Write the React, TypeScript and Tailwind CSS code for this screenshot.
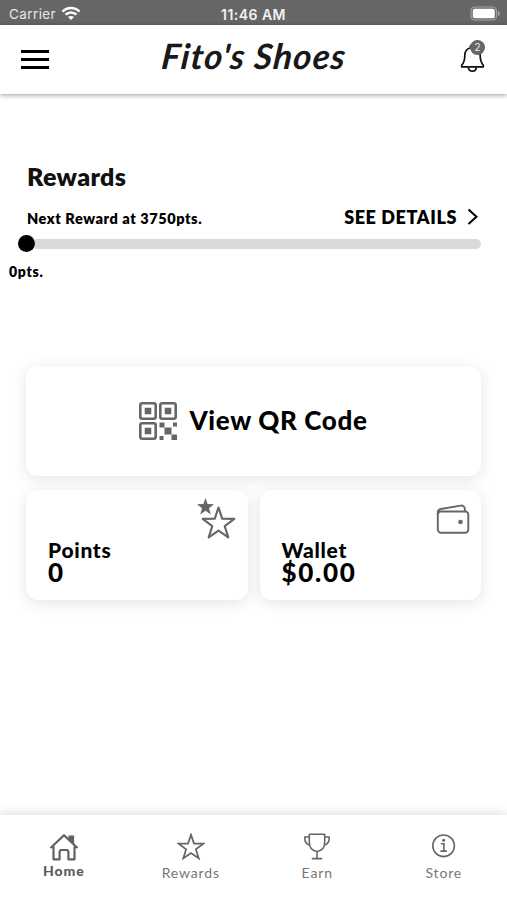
import type { ReactNode } from "react";

const STAR = "M14 1.8 17 10.6 26.4 10.7 18.9 16.4 21.7 25.3 14 20 6.3 25.3 9.1 16.4 1.6 10.7 11 10.6Z";

function StatusBar() {
  return (
    <div className="grid h-[25px] grid-cols-3 items-center bg-[#666] font-['Inter',sans-serif] text-[13.5px] leading-[25px] text-white">
      <div className="flex items-center gap-[5px] pt-[2px] pl-[9px] text-[#e6e6e6]">
        <span className="tracking-[0.4px]">Carrier</span>
        <svg className="-mt-[2px]" width="20" height="15" viewBox="0 0 20 15" fill="none" stroke="white" strokeWidth="2.6">
          <path d="M1.5 5.6C6.3.8 13.7.8 18.5 5.6M4.6 8.7c3-3 7.8-3 10.8 0" />
          <path d="M7 11.1c1.7-1.6 4.3-1.6 6 0l-3 3Z" fill="white" stroke="none" />
        </svg>
      </div>
      <div className="pt-[2px] text-center text-[14px] font-semibold tracking-[0.45px] whitespace-nowrap text-[#f2f2f2]">11:46 AM</div>
      <div className="flex justify-end pr-[6px]">
        <svg width="31" height="15" viewBox="0 0 31 15">
          <rect x="1" y="1" width="25.5" height="13" rx="4" fill="none" stroke="#a3a3a3" strokeWidth="1.2" />
          <rect x="2.8" y="2.8" width="22" height="9.5" rx="2" fill="white" />
          <path d="M28 5v5c2.4-1 2.4-4 0-5Z" fill="#aaa" />
        </svg>
      </div>
    </div>
  );
}

function Header() {
  return (
    <header className="flex h-[69px] items-start justify-between bg-white pr-[19px] pl-[21px] shadow-[0_1px_5px_rgba(0,0,0,0.4)]">
      <div className="mt-[25px] flex w-[28px] flex-col gap-[5px]">
        <div className="h-[3px] bg-black" />
        <div className="h-[3px] bg-black" />
        <div className="h-[3px] bg-black" />
      </div>
      <h1 className="mt-[10px] -skew-x-6 font-['Lato',sans-serif] text-[35px] leading-[40px] font-bold tracking-[1.1px] whitespace-nowrap text-[#191919] italic">
        Fito's Shoes
      </h1>
      <div className="relative mt-[15px] h-[34px] w-[28px]">
        <svg className="absolute top-[4px] left-0" width="26" height="29" viewBox="0 0 26 29" fill="none" stroke="#111" strokeWidth="1.7" strokeLinejoin="round">
          <path d="M10.3 3.8V3a2 2 0 0 1 4 0v.8c4.2 1 5.9 4 5.9 8 0 5 1.3 7.5 3.1 9.5v1.6H1.7v-1.6c1.8-2 3.1-4.5 3.1-9.5 0-4 1.5-7 5.5-8Z" />
          <path d="M8.4 23.3c.2 5.2 7.8 5.2 8 0" />
        </svg>
        <div className="absolute top-0 left-[10px] h-[15px] w-[15px] rounded-full bg-[#666] text-center font-['Inter',sans-serif] text-[10px] leading-[15px] text-[#eee]">2</div>
      </div>
    </header>
  );
}

function RewardsProgress() {
  return (
    <section className="pt-[67px] font-extrabold">
      <h2 className="pl-[27px] text-[25px] leading-[30px] tracking-[0.35px] text-[#111]">Rewards</h2>
      <div className="mt-[13px] flex h-[26px] items-center justify-between pr-[27px] pl-[27px]">
        <span className="pt-[3px] text-[14.5px] tracking-[0.56px]">Next Reward at 3750pts.</span>
        <span className="flex items-center gap-[10px]">
          <span className="text-[18px] tracking-[0.6px]">SEE DETAILS</span>
          <svg className="-mt-[1px]" width="13" height="18" viewBox="0 0 13 18" fill="none" stroke="black" strokeWidth="2">
            <path d="m1.5 1.5 8 7.3-8 7.3" />
          </svg>
        </span>
      </div>
      <div className="mt-[5px] flex h-[17px] items-center pr-[26px] pl-[18px]">
        <div className="h-[17px] w-[17px] rounded-full bg-black" />
        <div className="h-[10px] flex-1 rounded-r-full bg-[#d9d9d9]" />
      </div>
      <div className="mt-[10px] pl-[9px] text-[14px] leading-[20px] tracking-[0.7px]">0pts.</div>
    </section>
  );
}

function QrIcon() {
  return (
    <svg width="38" height="38" viewBox="0 0 38 38" fill="#666">
      <g fill="none" stroke="#666" strokeWidth="2.6">
        <rect x="1.3" y="1.3" width="15.4" height="15.4" rx="2" />
        <rect x="21.3" y="1.3" width="15.4" height="15.4" rx="2" />
        <rect x="1.3" y="21.3" width="15.4" height="15.4" rx="2" />
      </g>
      <path d="M5.7 5.7h6.6v6.6H5.7zM25.7 5.7h6.6v6.6h-6.6zM5.7 25.7h6.6v6.6H5.7zM20.5 20.5h5v5h-5zM25.5 25.5h7v7h-7zM34 20.5h4v4h-4zM20.5 34h4v4h-4zM32.5 32.5H38V38h-5.5z" />
    </svg>
  );
}

function StatCard({ title, value, icon, valueClass }: { title: string; value: string; icon: ReactNode; valueClass: string }) {
  return (
    <div className="flex h-[110px] flex-1 justify-between rounded-[12px] bg-white pr-[11px] pl-[21px] shadow-[0_3px_16px_rgba(0,0,0,0.11)]">
      <div className="pt-[49px] font-black">
        <div className="pl-[1px] text-[21px] leading-[22px] tracking-[0.7px]">{title}</div>
        <div className={valueClass}>{value}</div>
      </div>
      <div className="pt-[8px]">{icon}</div>
    </div>
  );
}

function Cards() {
  return (
    <section className="mt-[84px] flex flex-col gap-[14px] px-[26px]">
      <div className="flex h-[110px] items-center justify-center gap-[12px] rounded-[12px] bg-white shadow-[0_3px_16px_rgba(0,0,0,0.11)]">
        <QrIcon />
        <span className="-mt-[1px] text-[26px] font-black tracking-[0.65px]">View QR Code</span>
      </div>
      <div className="flex gap-[12px]">
        <StatCard
          title="Points"
          value="0"
          valueClass="pl-[1px] text-[26px] leading-[22px]"
          icon={
            <svg width="40" height="42" viewBox="0 0 40 42" fill="none">
              <path d="m8.5 0 2.1 6 6.4.2-5 4 1.8 6.2-5.3-3.6-5.3 3.6L5 10.2 0 6.2 6.4 6Z" fill="#666" />
              <path d="m21.5 9.5 3.8 11.3 12 .1-9.6 7.2 3.6 11.3-9.8-6.8-9.8 6.8 3.6-11.3-9.6-7.2 12-.1Z" stroke="#666" strokeWidth="2.1" strokeLinejoin="round" />
            </svg>
          }
        />
        <StatCard
          title="Wallet"
          value="$0.00"
          valueClass="pl-[1px] text-[26px] leading-[22px] tracking-[1.7px]"
          icon={
            <svg className="mt-[6px]" width="34" height="31" viewBox="0 0 34 31" fill="none" stroke="#666" strokeWidth="1.9" strokeLinejoin="round">
              <rect x="1.8" y="7.5" width="30.5" height="21.3" rx="3.2" />
              <path d="M1.8 11V8.5c0-2 1-3 3-3.5l20-3.4c2.5-.3 3.8 1.2 4 3.2l.2 2.7" />
              <circle cx="24.5" cy="18" r="2.3" fill="#666" stroke="none" />
            </svg>
          }
        />
      </div>
    </section>
  );
}

function NavItem({ label, children }: { label: string; children: ReactNode }) {
  return (
    <div className="flex w-[126.5px] flex-col items-center pt-[18px]">
      <div className="h-[28px]">{children}</div>
      <div className="mt-[2px] text-[14px] leading-[20px] tracking-[0.85px] text-[#777]">{label}</div>
    </div>
  );
}

function BottomNav() {
  return (
    <nav className="mt-auto flex h-[85px] bg-white shadow-[0_-2px_9px_rgba(0,0,0,0.13)]">
      <div className="flex w-[127.5px] flex-col items-center pt-[18px] text-[#5c5c5c]">
        <svg width="30" height="29" viewBox="0 0 30 29" fill="none" stroke="#606060" strokeWidth="2.2" strokeLinejoin="round">
          <path d="M4.5 13.5v12.8h6.1v-7.5c0-1 .8-1.8 1.8-1.8h5.2c1 0 1.8.8 1.8 1.8v7.5h6.1V13.5M1.5 15 15 2.2 28.5 15" />
          <path d="M19.5 2.5h5.6v8.5L19.5 6Z" fill="#606060" stroke="none" />
        </svg>
        <div className="-mt-[1px] text-[14px] leading-[20px] font-black tracking-[0.9px]">Home</div>
      </div>
      <NavItem label="Rewards">
        <svg width="28" height="28" viewBox="0 0 28 28" fill="none" stroke="#666" strokeWidth="1.8">
          <path d={STAR} />
        </svg>
      </NavItem>
      <NavItem label="Earn">
        <svg width="28" height="28" viewBox="0 0 28 28" fill="none" stroke="#666" strokeWidth="1.6" strokeLinejoin="round">
          <path d="M6.3 1.2h15.4v8c0 5-2.7 8.5-7.7 9.3-5-.8-7.7-4.3-7.7-9.3ZM14 18.5v7.1M8.8 25.6h10.4M6.3 4H1.8c-.2 5 1.4 7.5 5.2 8.3M21.7 4h4.5c.2 5-1.4 7.5-5.2 8.3" />
        </svg>
      </NavItem>
      <NavItem label="Store">
        <svg width="26" height="28" viewBox="0 0 26 28" fill="none" stroke="#666" strokeWidth="1.6">
          <circle cx="12.6" cy="12.8" r="10.8" />
          <path d="M9.9 10.8h3V18M9.4 18.1H16" />
          <circle cx="12.6" cy="7.3" r="1.5" fill="#666" stroke="none" />
        </svg>
      </NavItem>
    </nav>
  );
}

export default function App() {
  return (
    <main className="flex h-[900px] w-[507px] flex-col overflow-hidden bg-white font-['Lato',sans-serif] text-black">
      <StatusBar />
      <Header />
      <RewardsProgress />
      <Cards />
      <BottomNav />
    </main>
  );
}
